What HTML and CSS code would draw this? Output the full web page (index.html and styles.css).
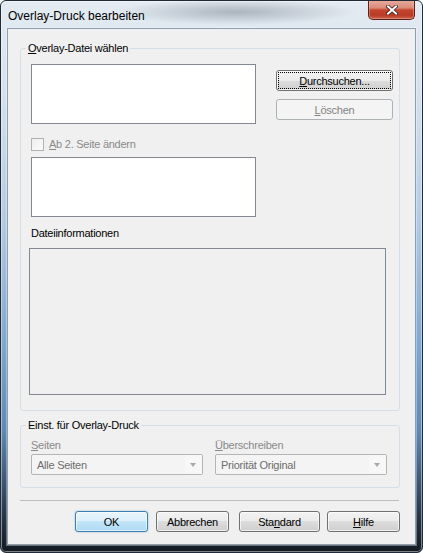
FILE: index.html
```html
<!DOCTYPE html>
<html lang="de">
<head>
    <meta charset="UTF-8">
    <meta name="viewport" content="width=device-width, initial-scale=1.0">
    <title>Overlay-Druck bearbeiten</title>
    <link rel="stylesheet" href="styles.css">
</head>
<body>

<!-- Dialog window -->
<div class="window">
    <div class="titlebar">
        <span class="title">Overlay-Druck bearbeiten</span>
        <button class="close-btn" aria-label="Schließen">
            <svg width="12" height="10" viewBox="0 0 12 10">
                <path d="M2 1.5 L10 8.5 M10 1.5 L2 8.5" stroke="#3a2520" stroke-width="3.6" stroke-linecap="square"/>
                <path d="M2 1.5 L10 8.5 M10 1.5 L2 8.5" stroke="#ffffff" stroke-width="2" stroke-linecap="square"/>
            </svg>
        </button>
    </div>

    <div class="client">
        <!-- Overlay file -->
        <fieldset class="group group-file">
            <legend><u>O</u>verlay-Datei wählen</legend>
            <div class="file-row">
                <div class="listbox"></div>
                <div class="file-buttons">
                    <button class="btn btn-focus"><u>D</u>urchsuchen...</button>
                    <button class="btn" disabled><u>L</u>öschen</button>
                </div>
            </div>
            <label class="check disabled"><span class="checkbox"></span><span><u>A</u>b 2. Seite ändern</span></label>
            <div class="listbox"></div>
            <div class="field-label info-label">Dateiinformationen</div>
            <div class="infobox"></div>
        </fieldset>

        <!-- Settings -->
        <fieldset class="group group-settings">
            <legend>Einst. für Overlay-Druck</legend>
            <div class="settings-row">
                <div class="setting">
                    <div class="field-label disabled"><u>S</u>eiten</div>
                    <div class="combo disabled"><span class="combo-text">Alle Seiten</span><span class="combo-arrow"></span></div>
                </div>
                <div class="setting">
                    <div class="field-label disabled"><u>Ü</u>berschreiben</div>
                    <div class="combo disabled"><span class="combo-text">Priorität Original</span><span class="combo-arrow"></span></div>
                </div>
            </div>
        </fieldset>

        <div class="separator"></div>

        <div class="dialog-buttons">
            <button class="btn btn-default btn-ok">OK</button>
            <button class="btn btn-cancel">Abbrechen</button>
            <button class="btn btn-std">Sta<u>n</u>dard</button>
            <button class="btn btn-help"><u>H</u>ilfe</button>
        </div>
    </div>
</div>

</body>
</html>
```

FILE: styles.css
```css
body {
    margin: 0;
    font-family: "Liberation Sans", Arial, sans-serif;
    font-size: 11px;
    letter-spacing: -0.25px;
    color: #000;
}

u {
    text-decoration-thickness: 1px;
    text-underline-offset: 1px;
}

/* Window frame (Aero glass) */
.window {
    box-sizing: border-box;
    width: 423px;
    height: 553px;
    border: 1px solid #1f2a36;
    border-radius: 6px;
    overflow: hidden;
    background:
        radial-gradient(ellipse 120px 13px at 235px 11px, rgba(70, 80, 95, 0.35), rgba(70, 80, 95, 0)),
        linear-gradient(to bottom, #e4ebf2 0%, #d3e0ec 18%, #b3cbe2 40%, #80a7cf 62%, #5f88b3 78%, #27384b 93%, #141a21 100%);
    box-shadow: inset 0 0 0 1px rgba(255, 255, 255, 0.45);
}

.titlebar {
    display: flex;
    justify-content: space-between;
    align-items: flex-start;
    height: 28px;
}

.title {
    margin: 8px 0 0 7px;
    font-size: 12px;
    line-height: 14px;
    letter-spacing: 0;
}

.close-btn {
    display: flex;
    align-items: center;
    justify-content: center;
    width: 47px;
    height: 20px;
    margin: -1px 7px 0 0;
    padding: 0;
    border: 1px solid #5a2118;
    border-top: none;
    border-radius: 0 0 5px 5px;
    background: linear-gradient(to bottom, #e9ad9f 0%, #d98b79 42%, #c5452f 52%, #b83b25 80%, #cf634c 100%);
    box-shadow: inset 0 0 0 1px rgba(255, 210, 200, 0.35);
}

/* Client area */
.client {
    box-sizing: border-box;
    width: 407px;
    height: 515px;
    margin-left: 7px;
    background: #f0f0f0;
    box-shadow: 0 0 0 1px #8e9eaf, 0 0 0 2px rgba(255, 255, 255, 0.35);
    overflow: hidden;
}

/* Group boxes */
.group {
    box-sizing: border-box;
    width: 380px;
    min-width: 0;
    margin: 0 0 0 12px;
    border: 1px solid #d5dfe5;
    border-radius: 3px;
}

.group legend {
    margin-left: -5px;
    padding: 0 2px;
    line-height: 14px;
}

.group-file {
    margin-top: 12px;
    padding: 9px 0 15px 10px;
}

.group-settings {
    margin-top: 7px;
    padding: 6px 0 12px 10px;
}

.file-row {
    display: flex;
}

.listbox {
    box-sizing: border-box;
    width: 225px;
    height: 60px;
    background: #fff;
    border: 1px solid #828790;
}

.file-buttons {
    display: flex;
    flex-direction: column;
    gap: 8px;
    margin: 6px 0 0 20px;
}

.file-buttons .btn {
    width: 117px;
}

/* Checkbox */
.check {
    display: flex;
    align-items: center;
    gap: 5px;
    height: 13px;
    margin: 14px 0 6px;
    line-height: 13px;
}

.checkbox {
    box-sizing: border-box;
    width: 13px;
    height: 13px;
    border: 1px solid #b1b1b1;
    background: linear-gradient(135deg, #eeeeee, #fbfbfb);
}

.disabled {
    color: #8a8a8a;
}

.field-label {
    line-height: 14px;
}

.info-label {
    margin-top: 9px;
}

.infobox {
    box-sizing: border-box;
    width: 357px;
    height: 147px;
    margin: 8px 0 0 -2px;
    border: 1px solid #828790;
    background: #f0f0f0;
}

/* Combo boxes */
.settings-row {
    display: flex;
    gap: 12px;
}

.combo {
    box-sizing: border-box;
    display: flex;
    align-items: center;
    width: 172px;
    height: 21px;
    margin-top: 2px;
    border: 1px solid #b5b5b5;
    border-radius: 2px;
    background: #f4f4f4;
}

.combo-text {
    flex: 1;
    padding-left: 5px;
    color: #6d6d6d;
}

.combo-arrow {
    position: relative;
    width: 17px;
    height: 19px;
    background: #f7f7f7;
}

.combo-arrow::after {
    content: "";
    position: absolute;
    left: 5px;
    top: 8px;
    border-left: 3.5px solid transparent;
    border-right: 3.5px solid transparent;
    border-top: 4px solid #a8a8a8;
}

.separator {
    width: 379px;
    margin: 12px 0 0 12px;
    border-top: 1px solid #bdbdbd;
}

/* Buttons */
.btn {
    box-sizing: border-box;
    height: 21px;
    padding: 0;
    font: inherit;
    letter-spacing: inherit;
    color: #000;
    border: 1px solid #707070;
    border-radius: 3px;
    background: linear-gradient(to bottom, #f2f2f2 0%, #ebebeb 50%, #dddddd 50%, #cfcfcf 100%);
    box-shadow: inset 0 0 0 1px rgba(255, 255, 255, 0.7);
}

.btn-focus {
    outline: 1px dotted #000;
    outline-offset: -3px;
}

.btn:disabled {
    color: #838383;
    border-color: #adb2b5;
    background: #f4f4f4;
    box-shadow: none;
}

.btn-default {
    border-color: #3c7fb1;
    background: linear-gradient(to bottom, #e9f5fc 0%, #dbeffb 50%, #c3e5f8 50%, #addaf3 100%);
    box-shadow: inset 0 0 0 1px rgba(255, 255, 255, 0.6), 0 0 2px rgba(60, 140, 200, 0.5);
}

.dialog-buttons {
    display: flex;
    margin: 10px 0 0 67px;
}

.btn-ok,
.btn-cancel,
.btn-help {
    width: 73px;
}

.btn-std {
    width: 81px;
    margin-left: 10px;
}

.btn-cancel {
    margin-left: 8px;
}

.btn-help {
    margin-left: 7px;
}
```
